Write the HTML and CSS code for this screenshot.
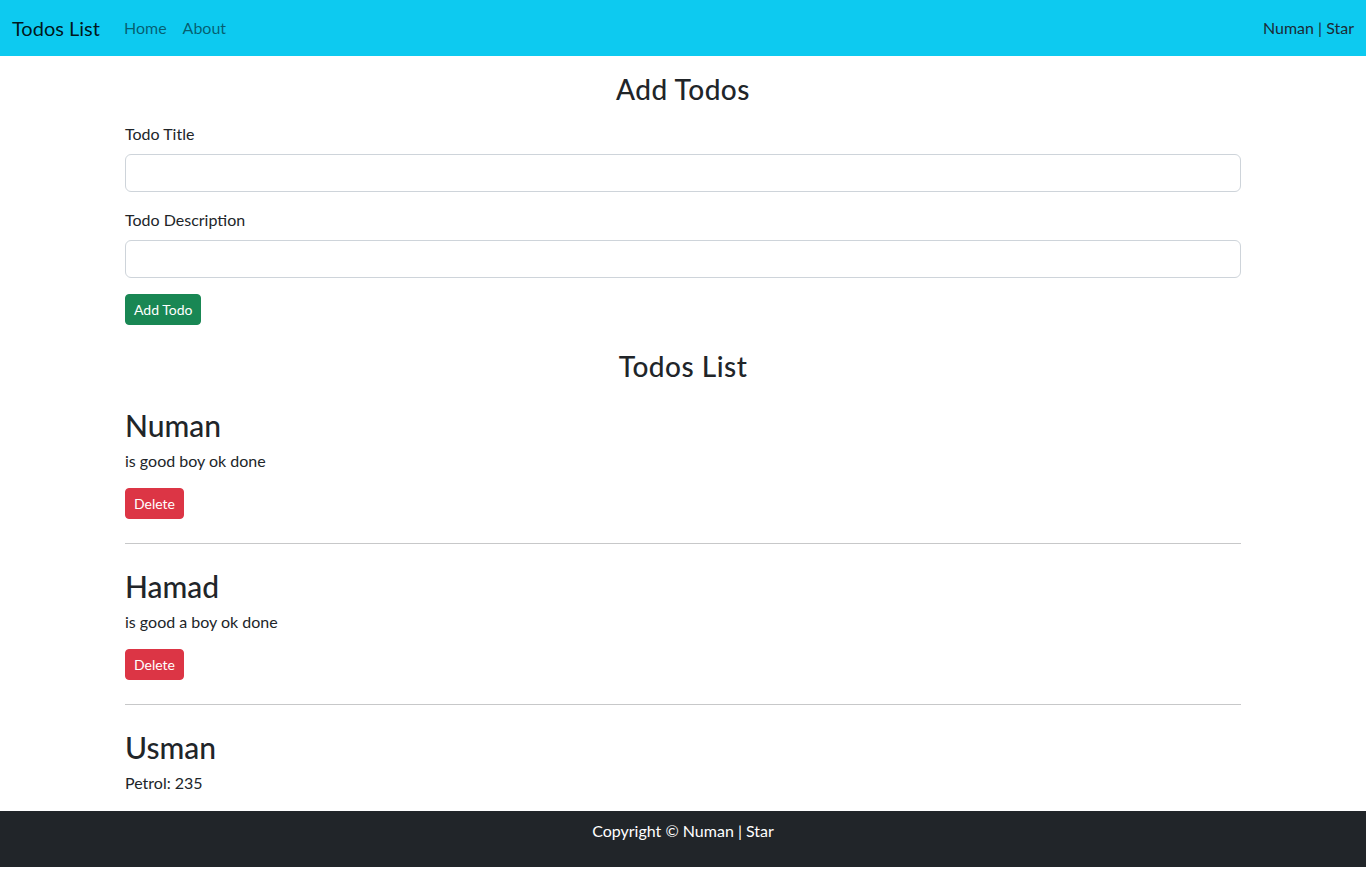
FILE: index.html
```html
<!DOCTYPE html>
<html lang="en">
<head>
<meta charset="utf-8">
<title>Todos List</title>
<link rel="stylesheet" href="styles.css">
</head>
<body>
<nav class="navbar">
  <div class="nav-left">
    <a class="brand" href="#">Todos List</a>
    <ul class="nav-links">
      <li><a class="nav-link" href="#">Home</a></li>
      <li><a class="nav-link" href="#">About</a></li>
    </ul>
  </div>
  <span class="nav-text">Numan | Star</span>
</nav>

<main class="container">
  <h3 class="section-title add-title">Add Todos</h3>
  <form class="todo-form">
    <div class="field">
      <label class="field-label" for="title">Todo Title</label>
      <input class="field-input" type="text" id="title">
    </div>
    <div class="field">
      <label class="field-label" for="desc">Todo Description</label>
      <input class="field-input" type="text" id="desc">
    </div>
    <button type="button" class="btn btn-success">Add Todo</button>
  </form>

  <h3 class="section-title list-title">Todos List</h3>

  <div class="todo">
    <h2 class="todo-title">Numan</h2>
    <p class="todo-desc">is good boy ok done</p>
    <button type="button" class="btn btn-danger">Delete</button>
  </div>
  <hr class="divider">
  <div class="todo">
    <h2 class="todo-title">Hamad</h2>
    <p class="todo-desc">is good a boy ok done</p>
    <button type="button" class="btn btn-danger">Delete</button>
  </div>
  <hr class="divider">
  <div class="todo todo-last">
    <h2 class="todo-title">Usman</h2>
    <p class="todo-desc">Petrol: 235</p>
  </div>
</main>

<footer class="footer">
  <p class="footer-text">Copyright &copy; Numan | Star</p>
</footer>
</body>
</html>
```

FILE: styles.css
```css
* { box-sizing: border-box; }

body {
  margin: 0;
  font-family: Lato, "Noto Sans", "Liberation Sans", sans-serif;
  font-size: 16px;
  line-height: 1.5;
  color: #212529;
  background: #fff;
}

a { text-decoration: none; }

.navbar {
  height: 56px;
  background: #0dcaf0;
  padding: 8px 12px;
  display: flex;
  align-items: center;
  justify-content: space-between;
}

.nav-left {
  display: flex;
  align-items: center;
}

.brand {
  font-size: 20px;
  line-height: 30px;
  color: rgba(0, 0, 0, 0.9);
  margin-right: 16px;
}

.nav-links {
  list-style: none;
  margin: 0;
  padding: 0;
  display: flex;
}

.nav-link {
  display: block;
  padding: 8px;
  color: rgba(0, 0, 0, 0.55);
}

.nav-text {
  color: #1c2b36;
}

.container {
  max-width: 1140px;
  margin: 0 auto;
  padding: 0 12px 1px;
}

.section-title {
  font-size: 28px;
  font-weight: 500;
  line-height: 1.2;
  letter-spacing: 0.5px;
  text-align: center;
  margin: 0;
}

.add-title {
  margin-top: 17px;
  margin-bottom: 15px;
}

.list-title {
  margin-top: 25px;
  margin-bottom: 21px;
}

.field {
  margin-bottom: 16px;
}

.field-label {
  display: block;
  margin-bottom: 8px;
}

.field-input {
  display: block;
  width: 100%;
  height: 38px;
  padding: 6px 12px;
  font: inherit;
  color: #212529;
  background: #fff;
  border: 1px solid #ced4da;
  border-radius: 6px;
}

.btn {
  display: inline-block;
  font-family: inherit;
  font-size: 14px;
  line-height: 21px;
  padding: 4px 8px;
  border: 1px solid transparent;
  border-radius: 4px;
  color: #fff;
  cursor: pointer;
}

.btn-success {
  background: #198754;
  border-color: #198754;
}

.btn-danger {
  background: #dc3545;
  border-color: #dc3545;
}

.todo-title {
  font-size: 30px;
  font-weight: 500;
  line-height: 38px;
  padding-top: 2px;
  margin: 0 0 5px;
}

.todo-desc {
  margin: 0 0 15px;
}

.todo .btn {
  display: block;
}

.divider {
  margin: 24px 0 21px;
  border: 0;
  border-top: 1px solid #212529;
  opacity: 0.25;
}

.footer {
  background: #212529;
  color: #fff;
  padding: 8px;
  text-align: center;
}

.footer-text {
  margin: 0 0 16px;
}
```
